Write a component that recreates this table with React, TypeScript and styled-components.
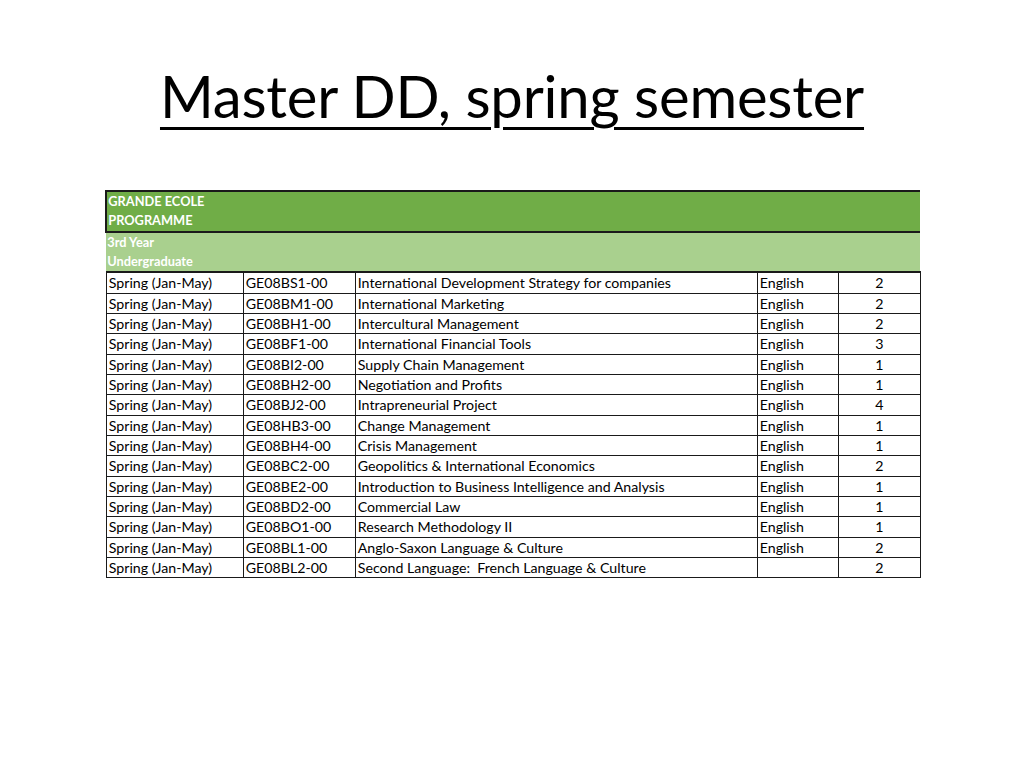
import React from 'react';
import styled, { createGlobalStyle } from 'styled-components';

const GlobalStyle = createGlobalStyle`
  html, body {
    margin: 0;
    padding: 0;
    background: #ffffff;
  }
  body {
    font-family: Lato, 'Open Sans', sans-serif;
    color: #000;
  }
`;

// Page slide
const Slide = styled.div`
  width: 1024px;
  height: 768px;
  display: flex;
  flex-direction: column;
  align-items: center;
  box-sizing: border-box;
  padding-top: 62px;
`;

const Title = styled.h1`
  margin: 0;
  height: 68px;
  font-family: Lato, 'Open Sans', sans-serif;
  font-weight: 400;
  font-size: 58px;
  line-height: 68px;
  text-decoration: underline;
  text-decoration-thickness: 3px;
  text-underline-offset: 9px;
  letter-spacing: -0.2px;
`;

const Table = styled.table`
  margin-top: 60px;
  margin-left: 2px;
  border-collapse: collapse;
  table-layout: fixed;
  width: 814px;
  font-family: Lato, 'Open Sans', sans-serif;
  font-size: 14.2px;
`;

const Col = styled.col<{ w: number }>`
  width: ${({ w }) => w}px;
`;

const HeadCell = styled.td<{ tone: 'dark' | 'light' }>`
  background: ${({ tone }) => (tone === 'dark' ? '#70AD47' : '#A9D08E')};
  color: #ffffff;
  font-weight: 700;
  font-size: 12.8px;
  line-height: 19.3px;
  padding: 0 1px;
  vertical-align: top;
  border-top: ${({ tone }) => (tone === 'dark' ? '2px solid #1a1a1a' : 'none')};
  border-bottom: 2px solid #1a1a1a;
  border-left: ${({ tone }) => (tone === 'dark' ? '2px solid #1a1a1a' : 'none')};
`;

const Cell = styled.td<{ center?: boolean }>`
  border: 1.5px solid #1a1a1a;
  height: 19.35px;
  line-height: 19.35px;
  padding: 0 2px;
  white-space: pre;
  overflow: hidden;
  text-align: ${({ center }) => (center ? 'center' : 'left')};
`;

const widths = [137, 112, 402, 81, 82];

const courses: [string, string, string, string][] = [
  ['GE08BS1-00', 'International Development Strategy for companies', 'English', '2'],
  ['GE08BM1-00', 'International Marketing', 'English', '2'],
  ['GE08BH1-00', 'Intercultural Management', 'English', '2'],
  ['GE08BF1-00', 'International Financial Tools', 'English', '3'],
  ['GE08BI2-00', 'Supply Chain Management', 'English', '1'],
  ['GE08BH2-00', 'Negotiation and Profits', 'English', '1'],
  ['GE08BJ2-00', 'Intrapreneurial Project', 'English', '4'],
  ['GE08HB3-00', 'Change Management', 'English', '1'],
  ['GE08BH4-00', 'Crisis Management', 'English', '1'],
  ['GE08BC2-00', 'Geopolitics & International Economics', 'English', '2'],
  ['GE08BE2-00', 'Introduction to Business Intelligence and Analysis', 'English', '1'],
  ['GE08BD2-00', 'Commercial Law', 'English', '1'],
  ['GE08BO1-00', 'Research Methodology II', 'English', '1'],
  ['GE08BL1-00', 'Anglo-Saxon Language & Culture', 'English', '2'],
  ['GE08BL2-00', 'Second Language:  French Language & Culture', '', '2'],
];

export default function App() {
  return (
    <>
      <GlobalStyle />
      <Slide>
        <Title>Master DD, spring semester</Title>
        <Table>
          <colgroup>
            {widths.map((w, i) => (
              <Col key={i} w={w} />
            ))}
          </colgroup>
          <tbody>
            <tr>
              <HeadCell tone="dark" colSpan={5}>
                GRANDE ECOLE
                <br />
                PROGRAMME
              </HeadCell>
            </tr>
            <tr>
              <HeadCell tone="light" colSpan={5}>
                3rd Year
                <br />
                Undergraduate
              </HeadCell>
            </tr>
            {courses.map(([code, name, lang, credits]) => (
              <tr key={code}>
                <Cell>Spring (Jan-May)</Cell>
                <Cell>{code}</Cell>
                <Cell>{name}</Cell>
                <Cell>{lang}</Cell>
                <Cell center>{credits}</Cell>
              </tr>
            ))}
          </tbody>
        </Table>
      </Slide>
    </>
  );
}
